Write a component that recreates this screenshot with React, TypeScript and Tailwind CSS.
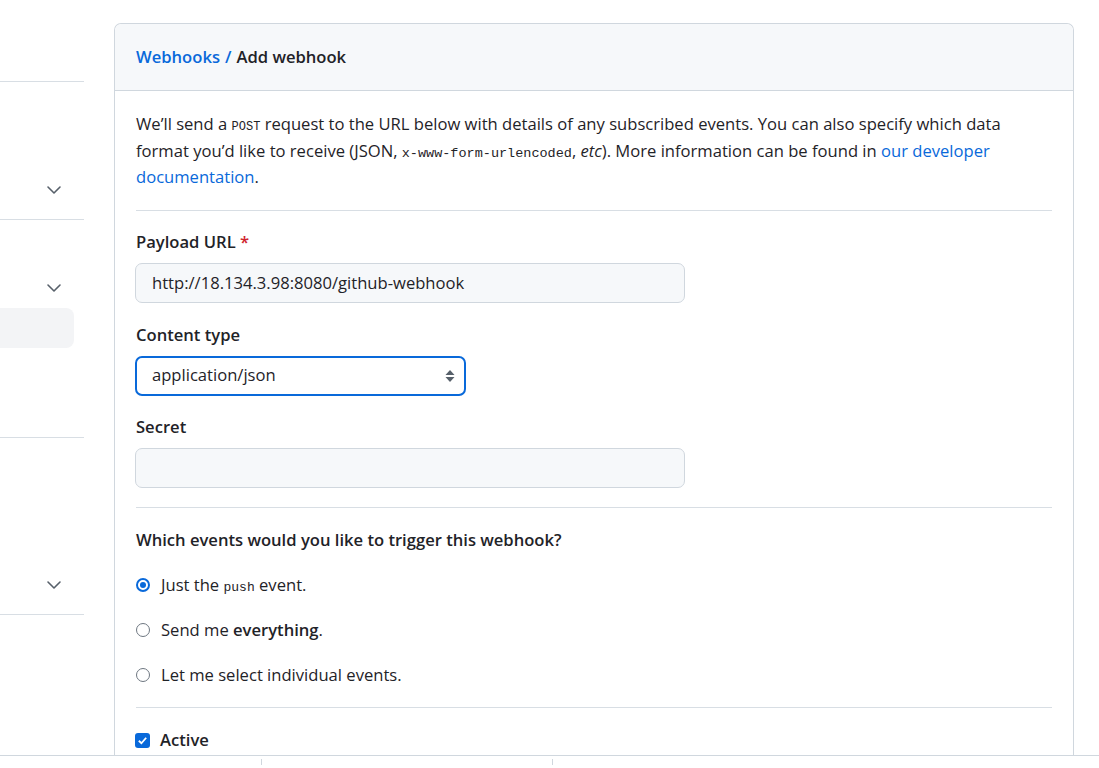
import { ChevronDown } from "lucide-react";

const font = { fontFamily: '"Open Sans", "Liberation Sans", sans-serif' };
const mono = { fontFamily: '"Liberation Mono", monospace' };

function SideSection({ h, chevronTop, children }: { h: string; chevronTop?: string; children?: React.ReactNode }) {
  return (
    <div className={`${h} relative border-b border-[#d8dee4]`}>
      {chevronTop && (
        <ChevronDown className={`absolute ${chevronTop} left-[42px] h-[24px] w-[24px] text-[#57606a]`} strokeWidth={1.6} />
      )}
      {children}
    </div>
  );
}

function Radio({ checked }: { checked?: boolean }) {
  return checked ? (
    <span className="flex h-[14px] w-[14px] shrink-0 items-center justify-center rounded-full border-2 border-[#0969da] bg-white">
      <span className="h-[6px] w-[6px] rounded-full bg-[#0969da]" />
    </span>
  ) : (
    <span className="h-[14px] w-[14px] shrink-0 rounded-full border border-[#6e7781] bg-white" />
  );
}

export default function App() {
  return (
    <div className="flex h-screen flex-col bg-white text-[#1f2328]" style={font}>
      <div className="flex flex-1 overflow-hidden">
        {/* sidebar */}
        <div className="w-[84px] shrink-0">
          <SideSection h="h-[82px]" />
          <SideSection h="h-[138px]" chevronTop="top-[96px]" />
          <SideSection h="h-[218px]" chevronTop="top-[56px]">
            <div className="absolute left-0 top-[88px] h-[40px] w-[74px] rounded-r-lg bg-[#f3f4f6]" />
          </SideSection>
          <SideSection h="h-[177px]" chevronTop="top-[135px]" />
        </div>

        {/* card */}
        <div className="ml-[30px] w-[960px] pt-[23px]">
          <div className="h-full rounded-t-[7px] border border-b-0 border-[#d0d7de]">
            <div className="flex h-[67px] items-center rounded-t-[7px] border-b border-[#d0d7de] bg-[#f6f8fa] px-[21px] text-[16.6px] font-semibold">
              <span className="text-[#0969da]">Webhooks</span>
              <span className="mx-[5px] text-[#0969da]">/</span>
              <span>Add webhook</span>
            </div>

            <div className="px-[21px] pt-[20px] text-[16.6px] leading-[26.5px]">
              <p>
                We’ll send a{" "}
                <code className="text-[12px] leading-none" style={mono}>POST</code>{" "}
                request to the URL below with details of any subscribed events. You can also specify which data
                <br />
                format you’d like to receive (JSON,{" "}
                <code className="text-[13.5px] leading-none" style={mono}>x-www-form-urlencoded</code>,{" "}
                <em>etc</em>). More information can be found in{" "}
                <a className="text-[#0969da]">our developer</a>
                <br />
                <a className="text-[#0969da]">documentation</a>.
              </p>

              <hr className="mt-[19px] border-[#d8dee4]" />

              <div className="mt-[18px]">
                <label className="block font-semibold">
                  Payload URL <span className="text-[#cf222e]">*</span>
                </label>
                <div className="-ml-px mt-[8px] flex h-[40px] w-[550px] items-center rounded-[7px] border border-[#d0d7de] bg-[#f6f8fa] px-[16px]">
                  http://18.134.3.98:8080/github-webhook
                </div>
              </div>

              <div className="mt-[19px]">
                <label className="block font-semibold">Content type</label>
                <div className="-ml-px mt-[7px] flex h-[40px] w-[331px] items-center justify-between rounded-[7px] border-2 border-[#0969da] bg-white pl-[15px] pr-[9px]">
                  <span>application/json</span>
                  <svg width="10" height="16" viewBox="0 0 10 16" className="text-[#57606a]">
                    <path d="M5 2 L9.5 7 H0.5 Z" fill="currentColor" />
                    <path d="M5 14 L9.5 9 H0.5 Z" fill="currentColor" />
                  </svg>
                </div>
              </div>

              <div className="mt-[18px]">
                <label className="block font-semibold">Secret</label>
                <div className="-ml-px mt-[8px] h-[40px] w-[550px] rounded-[7px] border border-[#d0d7de] bg-[#f6f8fa]" />
              </div>

              <hr className="mt-[19px] border-[#d8dee4]" />

              <p className="mt-[19px] font-semibold">Which events would you like to trigger this webhook?</p>

              <div className="mt-[18px] flex flex-col gap-[18.5px]">
                <label className="flex items-center gap-[11px]">
                  <Radio checked />
                  <span>
                    Just the{" "}
                    <code className="text-[13px] leading-none" style={mono}>push</code>{" "}
                    event.
                  </span>
                </label>
                <label className="flex items-center gap-[11px]">
                  <Radio />
                  <span>
                    Send me <strong className="font-semibold">everything</strong>.
                  </span>
                </label>
                <label className="flex items-center gap-[11px]">
                  <Radio />
                  <span>Let me select individual events.</span>
                </label>
              </div>

              <hr className="mt-[19px] border-[#d8dee4]" />

              <label className="-ml-px mt-[19px] flex items-center gap-[10px] font-semibold">
                <span className="flex h-[15px] w-[15px] items-center justify-center rounded-[3px] bg-[#0969da]">
                  <svg width="11" height="11" viewBox="0 0 12 12">
                    <path d="M2 6.3 L4.8 9 L10 3" stroke="white" strokeWidth="2" fill="none" />
                  </svg>
                </span>
                Active
              </label>
            </div>
          </div>
        </div>
      </div>

      {/* bottom strip */}
      <div className="flex h-[13px] shrink-0 border-t border-[#d0d7de]">
        <div className="w-[261px]" />
        <div className="mt-[3px] h-[6px] w-px bg-[#d0d7de]" />
        <div className="w-[290px]" />
        <div className="mt-[3px] h-[6px] w-px bg-[#d0d7de]" />
      </div>
    </div>
  );
}
